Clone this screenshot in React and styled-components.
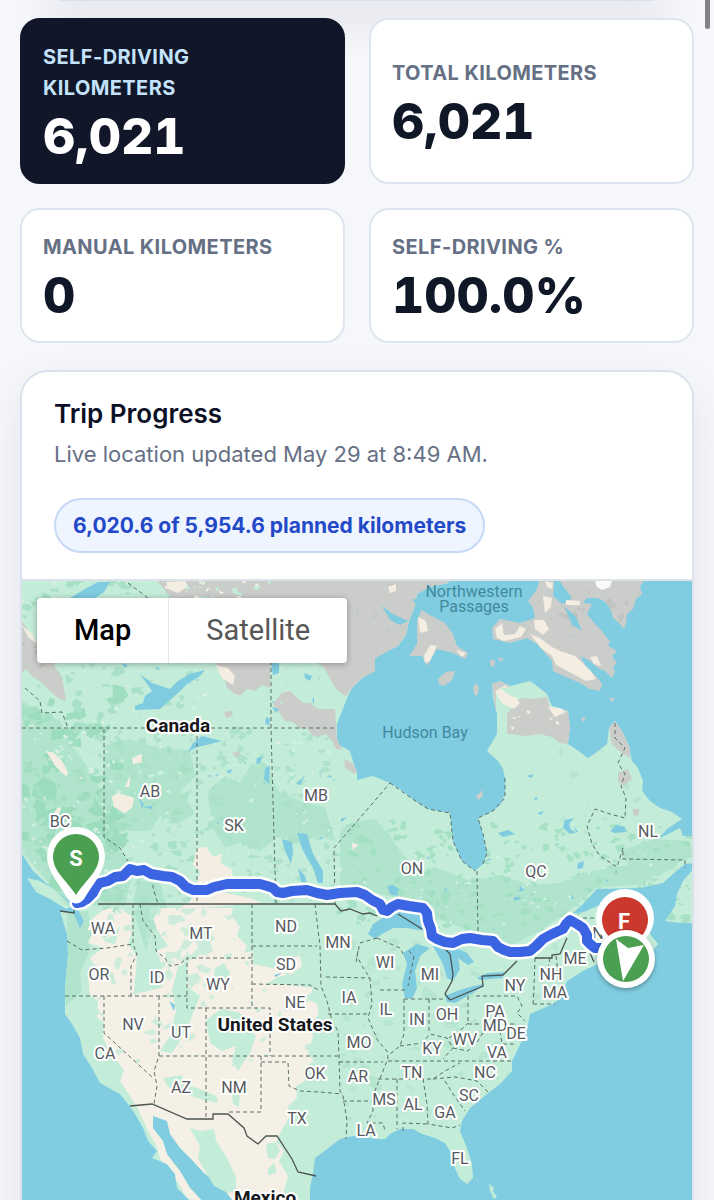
import React from 'react'
import styled, { createGlobalStyle, css } from 'styled-components'

const stats = [
  { label: 'Self-driving kilometers', value: '6,021', dark: true },
  { label: 'Total kilometers', value: '6,021' },
  { label: 'Manual kilometers', value: '0' },
  { label: 'Self-driving %', value: '100.0%' }
]

// Map shapes, all in the same coordinate space as the route
const LAND = [
  // mainland
  '22,570 455,570 448,582 430,586 417,593 415,605 409,620 406,634 398,645 388,650 375,657 375,670 362,677 352,687 348,695 342,710 337,723 337,743 350,750 353,760 357,773 357,779 373,775 390,782 400,788 414,799 428,808 450,812 453,840 462,860 475,870 483,863 487,852 483,833 478,817 493,810 501,803 505,793 505,777 503,768 498,760 487,750 497,733 497,713 493,697 492,683 500,680 510,685 530,680 537,685 547,693 552,705 568,710 570,726 568,743 577,749 588,757 597,751 607,743 609,727 615,720 622,730 628,743 632,760 638,767 643,780 642,790 650,800 660,807 672,811 682,818 667,828 658,838 670,832 680,827 683,835 695,835 695,862 685,863 673,873 663,882 640,887 597,888 583,903 572,913 584,911 597,905 625,905 650,933 658,943 650,953 620,975 598,963 583,970 567,980 560,997 553,1003 530,1013 528,1023 523,1037 517,1050 512,1060 512,1070 500,1083 487,1093 470,1107 462,1120 460,1130 467,1147 472,1163 473,1177 467,1183 460,1178 453,1163 450,1150 445,1142 435,1137 422,1133 413,1128 400,1128 390,1133 385,1138 375,1138 367,1136 353,1135 340,1138 327,1148 315,1157 313,1173 310,1187 310,1200 314,1270 290,1270 233,1200 220,1183 205,1173 193,1160 180,1147 170,1133 167,1120 153,1115 153,1127 163,1140 167,1153 180,1170 190,1187 204,1202 230,1240 215,1230 187,1197 177,1187 175,1173 167,1163 152,1157 157,1150 148,1140 143,1127 135,1113 128,1103 120,1093 100,1082 92,1067 83,1053 80,1037 72,1023 65,1013 65,987 68,953 67,933 60,910 73,912 80,928 84,920 76,905 60,892 47,883 33,870 22,853',
  // Vancouver Island
  '27,877 40,880 57,890 72,905 66,908 50,898 36,891',
  // Newfoundland
  '695,866 683,880 677,893 675,905 665,920 680,922 695,922',
  // Bahamas
  '489,1183 494,1187 493,1190 497,1196 494,1198 490,1190'
]

const GREY = [
  '150,570 455,570 448,582 430,586 417,593 415,605 409,620 406,634 398,645 388,650 375,657 375,670 362,677 352,687 346,695 338,690 333,683 323,665 300,655 271,650 270,687 262,684 255,690 247,688 240,695 234,692 227,687 224,675 215,663 200,640 190,610 170,596',
  '22,620 30,632 36,640 45,646 52,655 55,666 62,677 66,700 60,698 52,692 40,680 33,676 26,668 22,672',
  '273,703 282,692 290,690 303,702 310,702 318,708 335,708 337,738 342,748 336,748 332,740 326,733 318,736 312,734 306,726 300,728 293,721 285,720',
  '344,758 352,762 357,770 354,773 345,766',
  '224,711 232,710 233,715 226,717', '232,752 240,750 238,758',
  // Baffin and its neighbours
  '542,570 555,570 553,595 562,603 570,600 592,603 587,613 594,622 602,630 606,636 610,640 608,645 617,650 612,655 617,662 613,666 615,671 612,677 605,670 598,667 590,660 580,655 587,667 596,675 602,683 600,690 590,688 580,682 566,676 553,670 552,660 537,643 527,637 510,642 493,638 492,627 500,618 520,622 535,617 533,607 528,600 537,588',
  '553,570 640,570 646,578 640,585 642,593 636,598 633,608 627,613 626,622 624,628 618,621 613,617 610,607 604,600 597,597 587,597 580,605 567,602 572,597 563,585',
  '422,608 428,613 445,622 453,633 457,645 468,652 465,658 453,652 437,648 427,665 422,655 409,655 417,643 417,620',
  '438,678 446,671 455,670 452,679 444,685 439,683',
  '473,687 476,682 479,686 478,693 475,695',
  '490,659 495,659 494,666 490,664', '498,656 504,658 500,661',
  '609,696 615,698 612,701', '581,717 586,716 583,721',
  // Ungava
  '492,683 500,680 510,685 496,692 496,712', '507,713 514,705 520,697 532,698 547,696 550,707 568,710 570,726 568,743 560,742 552,736 540,733 526,735 507,733',
  '609,727 615,720 622,730 630,747 630,757 622,752 612,744',
  '618,772 628,768 632,778 624,785 618,780', '633,808 640,808 638,815 633,814', '476,795 483,789 482,796 478,799'
]

const BEIGE = [
  '93,917 105,908 120,907 131,915 132,930 128,944 137,955 134,993 148,990 160,987 162,965 156,950 168,945 158,930 153,918 160,907 233,907 231,915 240,925 237,935 247,945 244,952 253,950 253,963 273,967 287,958 300,955 302,965 292,973 278,976 266,983 290,984 313,987 309,998 318,1004 318,1015 310,1022 313,1035 308,1053 314,1060 303,1068 305,1080 296,1085 297,1097 288,1105 290,1115 283,1127 276,1140 284,1150 279,1160 288,1175 284,1190 290,1210 300,1270 290,1270 233,1200 220,1183 205,1173 193,1160 180,1147 170,1133 167,1120 153,1115 153,1127 163,1140 167,1153 180,1170 204,1202 187,1197 177,1180 160,1158 157,1146 148,1130 138,1108 132,1098 120,1080 124,1069 112,1054 103,1037 104,1022 97,1016 98,1000 90,994 88,975 96,965 90,957 103,947 88,942 94,928 87,930',
  '197,847 206,846 213,856 222,853 220,862 231,868 233,876 224,885 206,890 197,884 200,870 193,864',
  '180,908 196,895 225,892 250,897 262,902', '112,796 118,792 134,797 132,806 125,812 114,806',
  '54,812 58,806 61,808 58,816', '46,750 54,752 62,760 68,772 66,775 56,766', '132,757 142,753 142,761 133,763',
  '352,842 358,844 353,849', '125,786 130,775 129,786', '22,624 33,634 36,642 28,636', '166,581 185,580 188,585 178,592 168,588',
  '530,633 540,637 552,646 560,650 575,655 590,669 596,678 586,680 571,672 556,664 552,655 541,647',
  '495,628 502,622 504,634 515,633 520,625 526,628 521,636 504,640 497,637', '534,619 544,619 549,628 543,634 535,628',
  '543,595 552,597 551,606 545,612', '545,580 553,582 552,588 547,586', '418,616 426,620 428,630 420,632', '424,655 430,644 437,645 430,660 425,662',
  '495,690 506,684 520,702 514,708 502,702', '548,706 560,707 566,711 555,716', '566,599 580,600 580,604 566,604', '590,656 597,655 601,665 594,663',
  '216,664 228,667 235,675 233,684 222,677', '388,586 396,583 396,590 390,592', '456,649 466,652 462,656'
]

const GREEN = [
  '22,700 60,720 72,745 98,780 104,830 125,855 132,875 125,905 68,905 22,850',
  '67,912 88,910 92,935 88,955 80,972 82,990 66,1005 65,985 68,953',
  '138,880 160,882 168,910 150,935 146,950 138,925 132,905',
  '340,830 350,822 375,818 388,832 400,850 420,872 440,868 470,880 500,874 530,884 560,882 580,872 605,868 640,862 680,850 676,866 640,884 597,886 575,905 540,930 510,945 470,930 430,915 390,895 340,885',
  '208,790 225,775 240,782 252,762 270,772 278,790 300,800 325,806 335,840 320,835 300,842 278,836 260,850 240,842 225,846 212,826',
  '104,745 130,738 150,745 190,750 196,775 180,790 195,812 180,822 160,815 150,830 128,830 104,815',
  '345,865 372,868 378,890 345,884',
  '620,850 655,838 690,840 693,855 668,866 630,868'
]

const PATCHES = [
  '178,965 188,962 186,985 200,995 190,1020 180,1040 172,1052 160,1050 170,1035 176,1010 172,990',
  '206,1020 215,1012 222,1008 240,1012 244,1025 256,1035 250,1052 238,1070 232,1060 236,1045 222,1050 210,1042',
  '163,1077 182,1074 184,1083 200,1088 216,1095 218,1102 200,1098 184,1092 168,1086',
  '190,1127 200,1130 214,1128 216,1140 226,1155 236,1176 236,1190 228,1192 214,1185 204,1168 198,1158 200,1145',
  '266,1143 276,1141 280,1150 275,1158 268,1157', '268,1168 274,1162 277,1172 268,1174',
  '103,940 112,935 120,925 115,943', '105,975 112,970 116,984 108,980', '196,935 206,925 215,938 205,944', '232,1092 240,1090 239,1106 233,1103',
  '215,967 224,962 230,972 222,984 214,976'
]

const WATER = [
  '70,597 85,588 98,581 110,581 104,591 95,597',
  '140,673 152,682 170,688 178,680 190,673 205,669 200,675 187,683 178,692 170,699 160,708 135,709 135,705 143,702 145,695 152,690',
  '188,751 193,742 202,735 214,738 222,740 207,744 197,746',
  '297,832 307,833 313,853 323,870 323,882 318,882 313,867 303,850',
  '282,838 292,841 293,850 291,863 285,850', '298,867 305,875 307,882 301,881', '265,767 270,765 269,783 264,778', '257,757 263,755 260,762 256,763',
  '271,662 279,662 279,672 273,674', '304,672 312,675 310,680 305,677', '272,706 279,708 276,712', '266,716 270,718 269,725 265,722', '296,783 305,774 300,784',
  '340,818 347,816 342,821', '226,770 232,768 230,773', '312,698 314,697 314,704', '121,662 128,664 125,667', '272,598 279,600 274,603',
  '387,885 393,884 399,888 396,895 390,893',
  // Great Lakes
  '368,933 373,923 390,912 403,905 422,912 425,930 407,927 393,927 382,933 375,938',
  '403,952 417,943 430,947 420,955 415,970 417,987 412,998 405,997 402,983 407,963',
  '433,945 450,944 467,952 474,961 468,964 458,957 460,968 453,980 447,977 443,963',
  '445,995 457,990 473,985 485,983 473,992 455,1002 447,1001',
  '477,977 487,972 505,971 502,977 480,979',
  // lakes of Quebec and Labrador
  '498,832 508,829 515,833 503,836', '565,819 574,817 569,823 571,829 576,831 574,825 578,831 570,833 563,827', '610,830 617,824 625,826 626,831 615,832', '527,775 533,773 532,777',
  '537,812 544,810 541,814', '534,797 538,796 536,800', '578,862 584,860 583,867 577,868', '520,885 525,889 519,891', '514,896 523,897 514,900',
  '169,1000 175,1004 174,1010', '274,974 282,972 276,976',
  '382,605 393,613 408,620 400,624 390,619', '426,600 434,607 440,609 430,614 418,606 412,598', '564,605 576,616 582,630 572,624', '138,795 144,804 142,807', '143,806 152,805 152,808'
]

const BORDERS = [
  '22,727 337,727', '104,728 104,836 120,847 128,860', '197,728 197,903', '271,660 271,727 273,800 276,903', '335,903 334,847 390,782',
  '477,870 478,930', '128,582 148,597', '25,687 40,700 42,712 62,711 68,727', '150,870 154,890 158,903',
  '390,782 414,799 428,808 450,812 453,840 462,860 475,870', '483,863 487,852 483,833 478,817 493,810 505,797 505,777',
  '615,722 615,737 625,747 618,762 625,773 621,785 626,797 625,817 610,813 595,808 587,825 592,843 600,855 617,866 623,847 623,858 685,859 685,867',
  '67,940 82,949 107,947 133,943', '133,903 133,943 137,953 131,965 131,995', '65,995 187,995',
  '140,903 143,920 155,935 156,950 165,957 170,965 180,963 187,957', '252,957 187,957 187,1007 270,1007 270,1055', '252,903 252,1007',
  '252,945 317,945', '252,983 310,984 320,990', '315,903 317,920 320,945 321,985 327,1000 332,1020 338,1030 339,1055 340,1090 343,1095 347,1120 346,1138',
  '206,1007 206,1119', '159,1055 339,1055', '104,995 104,1032 153,1077', '159,995 159,1055 154,1070 157,1085 154,1103',
  '261,1055 261,1111 228,1111', '261,1061 288,1061 289,1085 300,1090 320,1091 342,1093', '326,976 370,977', '328,1013 368,1013', '339,1061 383,1061',
  '343,1100 372,1100', '377,937 360,942 357,955 362,965 370,977 372,1003 368,1017 378,1040 387,1050 388,1057 383,1070 372,1097 373,1110 367,1122 383,1122 385,1130',
  '377,937 400,947 404,955', '380,989 407,989', '409,950 414,955 408,985', '404,998 404,1033 400,1045 390,1053', '404,998 443,998', '429,998 429,1032',
  '400,1045 422,1042 430,1033 447,1037 453,1047 443,1058', '388,1060 512,1060', '378,1078 433,1078 445,1070 460,1062', '397,1078 397,1128',
  '423,1078 427,1103 428,1123 452,1127 460,1124', '403,1130 403,1122 428,1123', '433,1078 455,1076 467,1078 477,1080 488,1091', '445,1080 453,1093 465,1110',
  '468,995 468,1022', '476,995 517,995 522,1005 517,1012 525,1020', '468,1023 515,1023', '453,1047 468,1050 478,1040 484,1030', '500,1030 502,1043 516,1043',
  '535,957 534,985 533,1005', '556,955 558,972', '550,957 548,968', '583,917 610,917', '533,1003 555,1003', '449,1037 462,1028 468,1022', '358,950 356,962'
]

const FRONTIERS = [
  '98,903 335,903 341,910 350,908 363,913 370,912 377,915', '398,913 422,928', '445,948 450,953 453,973 452,980 445,993 450,999 483,985 482,975 503,974 517,960',
  '535,957 552,957 552,954 560,953 567,937', '590,952 594,961', '60,910 74,912 74,907',
  '130,1105 152,1103 187,1118 213,1118 213,1113 228,1113 244,1127 247,1135 258,1143 266,1135 277,1135 292,1158 298,1171 316,1175'
]

const ROUTE = '77,902 82,901 87,898 93,892 96,886 100,882 108,880 115,876 123,875 130,868 137,870 144,869 151,873 163,875 172,876 180,880 186,886 193,889 207,889 214,886 227,883 240,883 260,883 267,885 273,887 277,891 283,892 292,890 307,889 317,892 327,894 340,892 357,891 365,894 372,899 380,903 383,909 387,910 392,906 398,903 409,905 423,907 427,912 428,920 431,928 432,935 437,938 445,941 453,942 462,938 470,937 482,939 493,940 498,946 504,949 510,951 520,951 530,950 536,945 543,938 552,933 563,928 566,923 570,919 577,923 583,927 587,934 587,940 590,943 595,947 604,947'

const REGIONS = [
  ['AB', 150, 790], ['BC', 60, 820], ['SK', 234, 824], ['MB', 316, 794], ['ON', 412, 867], ['QC', 536, 870], ['NL', 648, 830], ['N', 598, 932],
  ['WA', 103, 927], ['OR', 99, 973], ['ID', 157, 976], ['MT', 201, 932], ['ND', 286, 925], ['SD', 286, 963], ['MN', 338, 941], ['WY', 218, 983],
  ['NE', 295, 1001], ['NV', 133, 1023], ['UT', 181, 1031], ['CA', 105, 1052], ['AZ', 181, 1086], ['NM', 234, 1086], ['OK', 315, 1072], ['TX', 297, 1117],
  ['IA', 349, 996], ['MO', 359, 1041], ['AR', 358, 1075], ['WI', 385, 961], ['MI', 430, 973], ['IL', 386, 1008], ['IN', 417, 1018], ['OH', 447, 1013],
  ['NY', 515, 984], ['PA', 495, 1010], ['MD', 495, 1024], ['DE', 516, 1032], ['WV', 465, 1038], ['KY', 432, 1047], ['VA', 497, 1051], ['TN', 412, 1071],
  ['NC', 485, 1071], ['SC', 469, 1094], ['MS', 384, 1098], ['AL', 413, 1103], ['GA', 445, 1111], ['LA', 366, 1129], ['FL', 460, 1157],
  ['NH', 551, 973], ['MA', 555, 991], ['ME', 575, 957]
]

const COUNTRIES = [['Canada', 178, 724], ['United States', 275, 1023], ['Mexico', 265, 1196]]

const SEAS = [['Northwestern', 474, 591], ['Passages', 474, 606], ['Hudson Bay', 425, 732]]

// Ground cover: x, y, width, height, colour, count, size
const COVER = [
  [22, 690, 100, 210, '#97dab9', 60, 12],
  [22, 580, 170, 330, '#a3dfc3', 170, 6],
  [100, 730, 230, 170, '#a9e0c7', 190, 5],
  [330, 820, 360, 110, '#9fdfc1', 220, 5],
  [340, 940, 220, 180, '#b3e5ce', 110, 6],
  [22, 580, 320, 300, '#d6f3e6', 150, 3],
  [22, 600, 130, 300, '#d9efe6', 60, 3],
  [350, 850, 320, 80, '#dcf5ea', 110, 2],
  [22, 580, 320, 300, '#f1f3ee', 70, 2],
  [140, 580, 200, 130, '#7fcbe0', 20, 2],
  [200, 740, 140, 130, '#7fcbe0', 16, 2],
  [390, 840, 280, 90, '#7fcbe0', 24, 2],
  [90, 905, 220, 160, '#c3ecd9', 110, 5],
  [150, 905, 60, 90, '#c3ecd9', 35, 8],
  [560, 740, 80, 120, '#b3e5cf', 20, 4]
]

// Specks over the bare northern ground
const TUNDRA = [
  [150, 580, 120, 30, '#f5f0e6', 26, 3],
  [150, 580, 120, 30, '#c3ecd9', 26, 4],
  [350, 580, 60, 60, '#c1c5c3', 10, 3],
  [273, 655, 60, 50, '#c3ecd9', 10, 3],
  [22, 620, 50, 70, '#bdbcb9', 16, 4],
  [560, 580, 80, 40, '#bfc2bf', 18, 4],
  [540, 600, 75, 80, '#bfc3c0', 14, 2],
  [510, 700, 55, 35, '#f5f0e6', 9, 2]
]

const randomFrom = (seed) => () => {
  seed = (seed * 16807) % 2147483647
  return seed / 2147483647
}

const makeCover = (areas, seed) => {
  const random = randomFrom(seed)
  return areas.map(([x, y, w, h, color, count, size]) => {
    let d = ''
    for (let i = 0; i < count; i++) {
      const cx = x + random() * w
      const cy = y + random() * h
      const scale = size * (0.3 + random() * 0.9)
      const points = [0, 1, 2, 3, 4, 5, 6].map((n) => {
        const angle = (n / 7) * Math.PI * 2
        const radius = scale * (0.2 + random() * 1.1)
        return `${(cx + Math.cos(angle) * radius).toFixed(1)} ${(cy + Math.sin(angle) * radius * 0.8).toFixed(1)}`
      })
      d += `M${points.join('L')}Z`
    }
    return { d, color }
  })
}

const cover = makeCover(COVER, 4217)
const tundra = makeCover(TUNDRA, 911)

const Shapes = ({ items, ...rest }) => (
  <g {...rest}>
    {items.map((points) => <polygon key={points} points={points} />)}
  </g>
)

const Lines = ({ items, ...rest }) => (
  <g fill="none" {...rest}>
    {items.map((points) => <polyline key={points} points={points} />)}
  </g>
)

const Specks = ({ items, ...rest }) => (
  <g {...rest}>
    {items.map(({ d, color }) => <path key={d.slice(0, 20)} d={d} fill={color} />)}
  </g>
)

const Clip = ({ id, items }) => (
  <clipPath id={id}>
    {items.map((points) => <polygon key={points} points={points} />)}
  </clipPath>
)

const TripMap = () => (
  <Canvas viewBox="22 580 670 660" role="img" aria-label="Trip route across Canada">
    <defs>
      <Clip id="land" items={LAND} />
      <Clip id="tundra" items={GREY} />
    </defs>
    <rect x="22" y="580" width="670" height="660" fill="#80cde1" />
    <Shapes items={LAND} fill="#c3ecd9" />
    <g clipPath="url(#land)">
      <Shapes items={GREEN} fill="#b0e4cc" />
      <Shapes items={BEIGE} fill="#f5f0e6" />
      <Specks items={cover} opacity="0.8" />
    </g>
    <Shapes items={GREY} fill="#cbcdca" />
    <Specks items={tundra} clipPath="url(#tundra)" />
    <Shapes items={BEIGE.slice(1)} fill="#f3ede2" />
    <Shapes items={PATCHES} fill="#c3ecd9" />
    <polygon points="595,580 612,580 610,586 602,589 597,586" fill="#fafafa" />
    <polygon points="500,687 536,685 530,693 512,696" fill="#c3ecd9" />
    <polygon points="497,700 505,705 506,733 497,733" fill="#c3ecd9" />
    <Shapes items={WATER} fill="#7fcbe0" />
    <Lines items={BORDERS} stroke="#5d6f69" strokeWidth="1" strokeDasharray="4 3" />
    <Lines items={FRONTIERS} stroke="#4c5451" strokeWidth="1.3" />
    {SEAS.map(([name, x, y]) => <Sea key={name} x={x} y={y + 5}>{name}</Sea>)}
    {REGIONS.map(([name, x, y]) => <Region key={name} x={x} y={y + 6}>{name}</Region>)}
    {COUNTRIES.map(([name, x, y]) => <Country key={name} x={x} y={y + 7}>{name}</Country>)}
    <g fill="none" strokeLinejoin="round" strokeLinecap="round">
      <polyline points={ROUTE} stroke="#fff" strokeWidth="15" />
      <polyline points={ROUTE} stroke="#3a64e2" strokeWidth="10" />
    </g>
    <path d="M76 826a29 29 0 0 0-29 29c0 15 12 28 21 43q8 9 16 0c9-15 21-28 21-43a29 29 0 0 0-29-29z" fill="#fff" />
    <path d="M76 833a23 23 0 0 0-23 23c0 14 14 24 23 38 9-14 23-24 23-38a23 23 0 0 0-23-23z" fill="#4a9f50" />
    <Pin x="76" y="865">S</Pin>
    <circle cx="625" cy="917" r="29" fill="#fff" />
    <circle cx="625" cy="919" r="23" fill="#cb382e" />
    <Pin x="624" y="928">F</Pin>
    <Here>
      <circle cx="626" cy="958" r="29" fill="#fff" />
      <circle cx="626" cy="958" r="23" fill="#4a9f50" />
      <polygon points="616,938 628,947 644,944 623,980" fill="#fff" />
    </Here>
  </Canvas>
)

const App = () => (
  <Page>
    <GlobalStyle />
    <ScrollThumb />
    <Previous />
    <Stats>
      {stats.map(({ label, value, dark }) => (
        <Stat key={label} $dark={dark}>
          <StatLabel $dark={dark}>{label}</StatLabel>
          <StatValue>{value}</StatValue>
        </Stat>
      ))}
    </Stats>
    <Trip>
      <TripHeader>
        <Title>Trip Progress</Title>
        <Updated>Live location updated May 29 at 8:49 AM.</Updated>
        <Badge>6,020.6 of 5,954.6 planned kilometers</Badge>
      </TripHeader>
      <MapWrapper>
        <TripMap />
        <MapTypes>
          <MapType type="button" $active>Map</MapType>
          <MapType type="button">Satellite</MapType>
        </MapTypes>
      </MapWrapper>
    </Trip>
  </Page>
)

export default App

const GlobalStyle = createGlobalStyle`
  * {
    box-sizing: border-box;
  }

  body {
    margin: 0;
    background: #f5f7fb;
    color: #101828;
    font-family: Inter, "Liberation Sans", sans-serif;
  }
`

const Page = styled.main`
  height: 100vh;
  overflow: hidden;
  padding: 0 20px;
`

const ScrollThumb = styled.div`
  position: absolute;
  top: 0;
  right: 4px;
  width: 5px;
  height: 29px;
  border-radius: 0 0 3px 3px;
  background: #828387;
`

const Previous = styled.div`
  height: 1px;
  margin: 0 40px 17px;
  background: #d9e0ec;
  box-shadow: 0 8px 40px 12px rgba(15, 23, 42, 0.1);
`

const Stats = styled.section`
  position: relative;
  display: grid;
  grid-template-columns: 1fr 1fr;
  gap: 24px;
  margin-bottom: 27px;
`

const Stat = styled.div`
  display: flex;
  flex-direction: column;
  justify-content: center;
  gap: 8px;
  padding: 22px 21px;
  border: 2px solid #dfe5f0;
  border-radius: 20px;
  background: #fff;

  ${({ $dark }) => $dark && css`
    border-color: #111628;
    background: #111628;
    color: #fff;
  `}
`

const StatLabel = styled.span`
  color: ${({ $dark }) => $dark ? '#c3e2fb' : '#667085'};
  font-size: 20px;
  font-weight: 700;
  line-height: 31px;
  letter-spacing: 0.02em;
  text-transform: uppercase;
`

const StatValue = styled.strong`
  font-size: 50px;
  font-weight: 800;
  line-height: 48px;
  font-variant-numeric: tabular-nums;
`

const Trip = styled.section`
  border: 2px solid #dbe2ed;
  border-radius: 28px;
  background: #fff;
  box-shadow: 0 16px 44px rgba(15, 23, 42, 0.08);
  overflow: hidden;
`

const TripHeader = styled.header`
  padding: 22px 32px 26px;
  border-bottom: 2px solid #dbe2e8;
`

const Title = styled.h2`
  margin: 0;
  color: #0c1024;
  font-size: 26px;
  font-weight: 600;
  line-height: 40px;
`

const Updated = styled.p`
  margin: 0 0 24px;
  color: #667085;
  font-size: 22px;
  line-height: 40px;
`

const Badge = styled.span`
  display: inline-block;
  padding: 0 17px;
  border: 2px solid #c5d8f6;
  border-radius: 28px;
  background: #eff5fe;
  color: #2449c8;
  font-size: 21px;
  font-weight: 700;
  line-height: 51px;
  vertical-align: top;
`

const MapWrapper = styled.div`
  position: relative;
`

const Canvas = styled.svg`
  display: block;
  width: 100%;
  font-family: Roboto, sans-serif;
  text-anchor: middle;
`

const Sea = styled.text`
  fill: #41899f;
  font-size: 16px;
`

const Region = styled.text`
  fill: #565b60;
  stroke: #fff;
  stroke-width: 4px;
  stroke-linejoin: round;
  paint-order: stroke;
  font-size: 16px;
`

const Country = styled(Region)`
  fill: #16181b;
  font-size: 19px;
  font-weight: 700;
`

const Pin = styled.text`
  fill: #fff;
  font-size: 22px;
  font-weight: 700;
`

const Here = styled.g`
  filter: drop-shadow(0 2px 2px rgba(0, 0, 0, 0.3));
`

const MapTypes = styled.div`
  position: absolute;
  top: 17px;
  left: 15px;
  display: flex;
  border-radius: 4px;
  background: #fff;
  box-shadow: 0 1px 6px rgba(0, 0, 0, 0.3);
`

const MapType = styled.button`
  padding: 0 37px;
  border: 0;
  border-left: ${({ $active }) => $active ? '0' : '1px solid #e6e6e6'};
  background: none;
  color: ${({ $active }) => $active ? '#000' : '#565656'};
  font-family: Roboto, sans-serif;
  font-size: 29px;
  font-weight: ${({ $active }) => $active ? 500 : 400};
  line-height: 65px;
`
